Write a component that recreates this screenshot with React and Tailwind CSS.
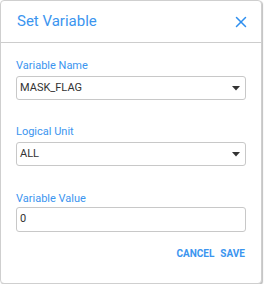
import { X } from 'lucide-react';

function Caret() {
  return (
    <svg width="8" height="5" viewBox="0 0 8 5" className="shrink-0">
      <path d="M0 0h8L4 4.5z" fill="#333" />
    </svg>
  );
}

function Field({ label, gap = 'mb-[3px]', children }) {
  return (
    <div className="flex flex-col">
      <label className={`text-[11px] leading-[14px] text-[#3b95ef] ${gap}`}>{label}</label>
      {children}
    </div>
  );
}

function SelectBox({ value }) {
  return (
    <div className="h-6 border border-[#c8c8c8] rounded-[3px] flex items-center justify-between pl-[3px] pr-[5px]">
      <span className="text-[11px] text-[#333]">{value}</span>
      <Caret />
    </div>
  );
}

export default function App() {
  return (
    <div className="w-[262px] h-[284px] bg-white border border-[#cfcfcf] rounded-[4px] shadow-[1px_1px_1px_rgba(0,0,0,0.25)] flex flex-col" style={{ fontFamily: 'Roboto, "Liberation Sans", sans-serif' }}>
      {/* header */}
      <div className="h-[42px] px-4 flex items-center justify-between border-b border-[#cdcdcd] shrink-0">
        <h2 className="text-[15px] text-[#3b95ef]">Set Variable</h2>
        <X size={18} strokeWidth={2} color="#2f8fef" className="-mr-[5px]" />
      </div>

      <div className="px-[15px] pt-[16px] flex flex-col">
        <Field label="Variable Name">
          <SelectBox value="MASK_FLAG" />
        </Field>
        <div className="h-[25px]" />
        <Field label="Logical Unit">
          <SelectBox value="ALL" />
        </Field>
        <div className="h-[26px]" />
        <Field label="Variable Value" gap="mb-[1px]">
          <div className="h-[25px] border border-[#c8c8c8] rounded-[3px] flex items-center pl-[3px]">
            <span className="text-[11px] text-[#333]">0</span>
          </div>
        </Field>
        <div className="flex justify-end gap-[6px] mt-[16px] pr-[1px]">
          <button className="text-[10px] leading-3 font-bold text-[#3b95ef]">CANCEL</button>
          <button className="text-[10px] leading-3 font-bold text-[#3b95ef]">SAVE</button>
        </div>
      </div>
    </div>
  );
}
